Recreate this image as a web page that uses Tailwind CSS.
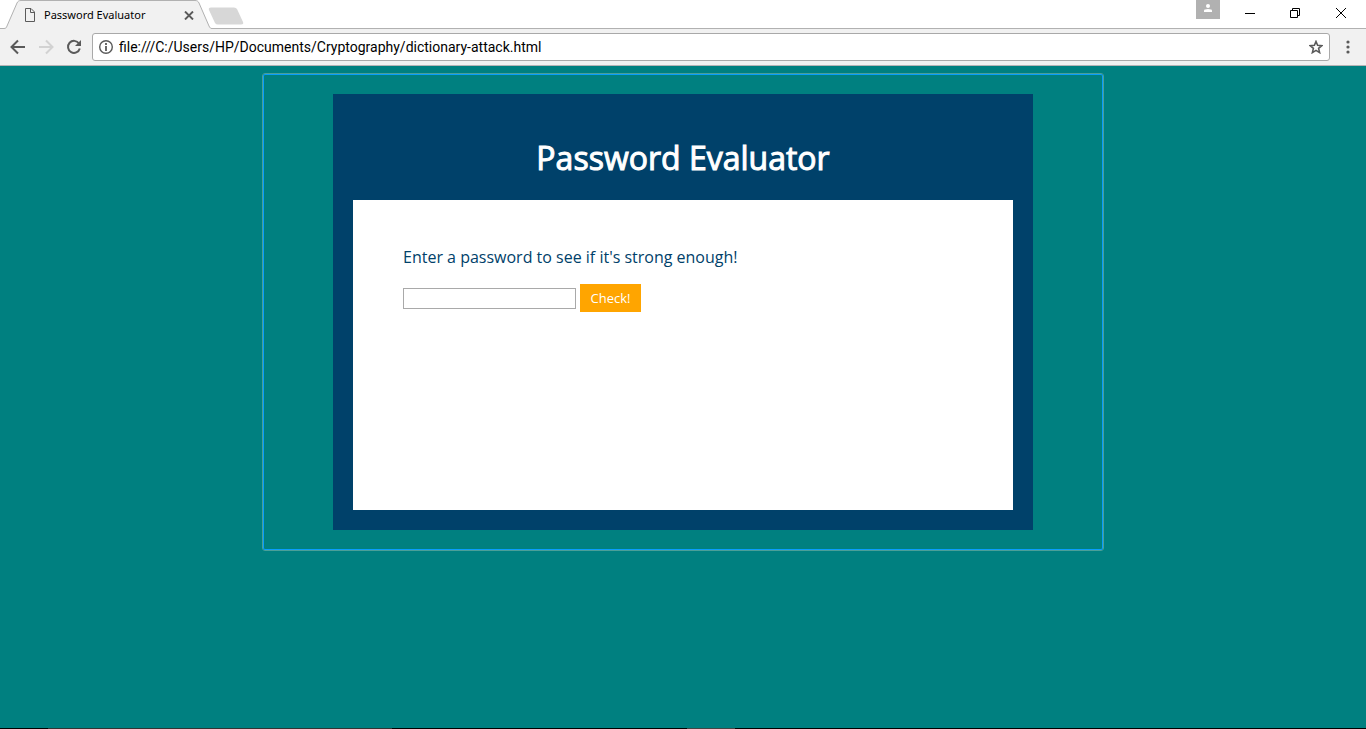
<!DOCTYPE html>
<html lang="en">
<head>
<meta charset="utf-8">
<title>Password Evaluator</title>
<script src="https://cdn.jsdelivr.net/npm/@tailwindcss/browser@4"></script>
</head>
<body class="flex min-h-screen flex-col bg-[#008080] font-['Open_Sans',sans-serif]">
<header class="bg-[#f1f1f1]">
  <div class="relative flex h-[29px] items-start bg-white">
    <svg class="absolute inset-0 h-full w-full" fill="none" aria-hidden="true">
      <path d="M211 28.5H4000" stroke="#b1b1b1"/>
      <path d="M0 28.5H4C6 28.5 6.500 27.500 7 26L17 3C18 1 19 .5 21 .5H195C197 .5 198 1 199 3L209 26C210 28 210.500 28.500 212 28.500V29H0Z" fill="#f1f1f1"/>
      <path d="M0 28.500H4C6 28.500 6.500 27.500 7 26L17 3C18 1 19 .5 21 .5H195C197 .5 198 1 199 3L209 26C210 28 210.500 28.500 212 28.500" stroke="#b1b1b1"/>
      <path d="M211 7.500H234Q236 7.500 237 9L243 22Q244 24.500 241 24.500H218Q216 24.500 215 23L209 10Q208 7.500 211 7.500Z" fill="#d7d7d7"/>
    </svg>
    <div class="relative flex h-[29px] w-[212px] items-center pt-px pl-6">
      <svg class="h-[14px] w-3" viewBox="0 0 12 14" fill="none" stroke="#5a5a5a" aria-hidden="true"><path d="M1.500 .5H7L10.500 4V13.500H1.500ZM6.500 .5V4.500H10.500"/></svg>
      <span class="ml-2 w-[140px] font-['Noto_Sans',sans-serif] text-[11px] text-black">Password Evaluator</span>
      <button aria-label="Close tab"><svg class="h-[9px] w-[10px]" viewBox="0 0 10 9" stroke="#5a5a5a" stroke-width="1.900"><path d="M1 .5L9 8.500M9 .5L1 8.500"/></svg></button>
    </div>
    <div class="relative ml-auto flex items-start">
      <button aria-label="Profile" class="mr-[25px] flex h-[19px] w-6 justify-center bg-[#b1b1b1] pt-1"><svg class="h-2 w-2" viewBox="0 0 8 8" fill="#fff"><circle cx="4" cy="2" r="2"/><path d="M0 8V6.500Q0 5 4 5T8 6.500V8Z"/></svg></button>
      <button aria-label="Minimize" class="mr-[35px] pt-2"><svg class="h-[11px] w-[10px]" viewBox="0 0 10 11" stroke="#000"><path d="M0 5.500H10"/></svg></button>
      <button aria-label="Restore" class="mr-[36px] pt-2"><svg class="h-[10px] w-[10px]" viewBox="0 0 10 10" fill="none" stroke="#000"><path d="M.5 2.500H7.500V9.500H.5ZM2.500 2.500V.5H9.500V7.500H7.500"/></svg></button>
      <button aria-label="Close window" class="mr-5 pt-2"><svg class="h-[10px] w-[10px]" viewBox="0 0 10 10" stroke="#000"><path d="M0 0L10 10M10 0L0 10"/></svg></button>
    </div>
  </div>
  <div class="flex h-[37px] items-center border-b border-[#b6b4b6] pl-[10px]">
    <button aria-label="Back"><svg class="h-4 w-4" viewBox="0 0 16 16" fill="none" stroke="#5a5a5a" stroke-width="2"><path d="M15 8H2M8 1.500L1.500 8L8 14.500"/></svg></button>
    <button aria-label="Forward" class="ml-3"><svg class="h-4 w-4" viewBox="0 0 16 16" fill="none" stroke="#d2d2d2" stroke-width="2"><path d="M1 8H14M8 1.500L14.500 8L8 14.500"/></svg></button>
    <button aria-label="Reload" class="ml-3"><svg class="h-4 w-4" viewBox="0 0 16 16"><path d="M13 4.500A6 6 0 1 0 13.800 9.500" fill="none" stroke="#5a5a5a" stroke-width="2"/><path d="M15 1V7H9Z" fill="#5a5a5a"/></svg></button>
    <div class="ml-[10px] flex h-7 flex-1 items-center rounded-[3px] border border-[#a9a9a9] bg-white px-[6px]">
      <svg class="h-[14px] w-[14px]" viewBox="0 0 14 14" fill="none" stroke="#5a5a5a" aria-hidden="true"><circle cx="7" cy="7" r="6.300" stroke-width="1.400"/><path d="M7 6V11M7 3V5" stroke-width="1.800"/></svg>
      <input aria-label="Address" type="text" value="file:///C:/Users/HP/Documents/Cryptography/dictionary-attack.html" class="ml-[6px] min-w-0 flex-1 font-[Roboto,sans-serif] text-[14px] text-black outline-none">
      <button aria-label="Bookmark this page"><svg class="h-[14px] w-[14px]" viewBox="0 0 14 14" fill="none" stroke="#5a5a5a" stroke-width="1.600"><path d="M7 1.500L8.600 5.300L12.800 5.700L9.600 8.400L10.600 12.600L7 10.400L3.400 12.600L4.400 8.400L1.200 5.700L5.400 5.300Z"/></svg></button>
    </div>
    <button aria-label="Menu" class="mx-4"><svg class="h-[14px] w-1" viewBox="0 0 4 14" fill="#5a5a5a"><circle cx="2" cy="2" r="1.600"/><circle cx="2" cy="7" r="1.600"/><circle cx="2" cy="12" r="1.600"/></svg></button>
  </div>
</header>
<main class="mx-auto mt-[7px] w-full max-w-[842px] rounded-[3px] border border-[#4a9f98]">
  <div class="rounded-[2px] border border-[#0a9dfb] px-[69px] py-[19px]">
    <section class="bg-[#00416a] p-5">
      <h1 class="pt-[22px] pb-[20px] text-center text-[32px] leading-[44px] font-normal text-white [-webkit-text-stroke:1px_white]">Password Evaluator</h1>
      <div class="min-h-[310px] bg-white px-[50px] pt-[46px]">
        <label for="password" class="block text-base leading-[22px] text-[#00416a]">Enter a password to see if it's strong enough!</label>
        <div class="mt-4 flex items-center gap-1">
          <input id="password" type="text" class="h-[21px] w-[173px] border border-[#a9a9a9] bg-white px-1 text-[13px]">
          <button class="h-7 min-w-[61px] bg-[#ffa500] px-[10px] pt-px text-[13px] text-white">Check!</button>
        </div>
      </div>
    </section>
  </div>
</main>
<div class="mt-auto flex h-px bg-black"><div class="ml-12 w-[344px] bg-[#333]"></div><div class="ml-[295px] w-12 bg-[#444]"></div></div>
</body>
</html>
